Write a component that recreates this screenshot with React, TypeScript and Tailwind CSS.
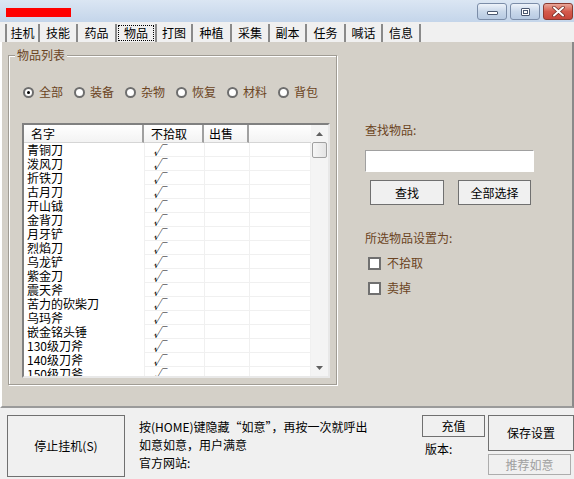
import React from "react";

const items = [
  "青铜刀",
  "泼风刀",
  "折铁刀",
  "古月刀",
  "开山钺",
  "金背刀",
  "月牙铲",
  "烈焰刀",
  "乌龙铲",
  "紫金刀",
  "震天斧",
  "苦力的砍柴刀",
  "乌玛斧",
  "嵌金铭头锤",
  "130级刀斧",
  "140级刀斧",
  "150级刀斧",
];

const tabs = [
  { t: "挂机", w: "w-[35px]" },
  { t: "技能", w: "w-[38px]" },
  { t: "药品", w: "w-[39px]" },
  { t: "物品", w: "w-[40px]", sel: true },
  { t: "打图", w: "w-[36px]" },
  { t: "种植", w: "w-[39px]" },
  { t: "采集", w: "w-[38px]" },
  { t: "副本", w: "w-[37px]" },
  { t: "任务", w: "w-[39px]" },
  { t: "喊话", w: "w-[37px]" },
  { t: "信息", w: "w-[38px]" },
];

const radios = [
  { t: "全部", on: true },
  { t: "装备" },
  { t: "杂物" },
  { t: "恢复" },
  { t: "材料" },
  { t: "背包" },
];

function Radio({ checked }: { checked?: boolean }) {
  return (
    <span className="flex h-[11px] w-[11px] shrink-0 items-center justify-center rounded-full border-2 border-[#6e6e6e] bg-white">
      {checked && <span className="h-[3px] w-[3px] rounded-full bg-black" />}
    </span>
  );
}

function Check() {
  return <span className="block h-[13px] w-[13px] shrink-0 border-2 border-[#707070] bg-white" />;
}

function WinBtn({ kind }: { kind: "min" | "max" | "close" }) {
  const base =
    kind === "close"
      ? "bg-linear-to-b from-[#e9a79a] via-[#d45a4c] to-[#c8463a] border-[#8a3a30]"
      : "bg-linear-to-b from-[#eef3fa] via-[#c9d8ea] to-[#b7cae2] border-[#7b8da8]";
  return (
    <div className={`flex h-[17px] w-[30px] items-center justify-center rounded-[3px] border ${base}`}>
      {kind === "min" && (
        <span className="mt-[3px] block h-[4px] w-[11px] rounded-[1px] border border-[#4a5870] bg-white" />
      )}
      {kind === "max" && (
        <span className="block h-[8px] w-[9px] rounded-[1px] border border-[#4a5870] bg-white p-[1px]">
          <span className="block h-full w-full border border-[#4a5870]" />
        </span>
      )}
      {kind === "close" && (
        <svg width="13" height="11" viewBox="0 0 13 11">
          <path d="M2 1.5 L11 9.5 M11 1.5 L2 9.5" stroke="#6a2a22" strokeWidth="3.4" strokeLinecap="round" />
          <path d="M2 1.5 L11 9.5 M11 1.5 L2 9.5" stroke="#ffffff" strokeWidth="2" strokeLinecap="round" />
        </svg>
      )}
    </div>
  );
}

function Btn({ children, className }: { children: React.ReactNode; className?: string }) {
  return (
    <div
      className={`flex items-center justify-center whitespace-nowrap border border-[#707070] bg-[#f0f0f0] text-[12px] text-black ${className ?? ""}`}
    >
      {children}
    </div>
  );
}

export default function App() {
  return (
    <div className="flex h-[479px] w-[574px] flex-col overflow-hidden bg-[#f0f0f0] font-['Noto_Sans_CJK_SC','Noto_Sans',sans-serif] text-[12px] leading-[14px]">
      {/* Title bar */}
      <div className="flex h-[22px] shrink-0 items-center bg-linear-to-b from-[#dbe6f3] to-[#c4d5ea] pl-[6px] pr-[1px]">
        <div className="mt-[3px] h-[9px] w-[65px] bg-[#ff0000]" />
        <div className="ml-auto flex gap-[3px] self-start pt-[3px]">
          <WinBtn kind="min" />
          <WinBtn kind="max" />
          <WinBtn kind="close" />
        </div>
      </div>

      {/* Tabs */}
      <div className="flex h-[20px] shrink-0 items-end pl-[5px]">
        {tabs.map((tb, i) => (
          <div
            key={tb.t}
            className={`flex h-[18px] items-center justify-center border-r-2 border-r-[#8a8a8a] ${
              i === 0 ? "border-l-2 border-l-[#8a8a8a]" : ""
            } ${tb.w} text-[12px] text-black`}
          >
            {tb.sel ? (
              <span className="flex h-[16px] w-[36px] items-center justify-center border border-dotted border-black">
                {tb.t}
              </span>
            ) : (
              tb.t
            )}
          </div>
        ))}
      </div>

      {/* Tab panel */}
      <div className="flex h-[366px] shrink-0 border-b-2 border-l-2 border-r-2 border-b-[#9a9a9a] border-l-white border-r-[#8a8a8a] bg-[#d4d0c8] pl-[6px] text-[#6b4423]">
        {/* Group box */}
        <fieldset className="mt-[5px] h-[338px] w-[329px] shrink-0 border border-[#a09c94] px-0 pb-0 pt-0 shadow-[inset_1px_1px_0_#ffffff,1px_1px_0_#ffffff]">
          <legend className="ml-[6px] bg-[#d4d0c8] px-[2px] text-[12px] leading-[16px] text-[#6b4423]">物品列表</legend>
          <div className="ml-[14px] mt-[21px] flex h-[16px] items-center whitespace-nowrap">
            {radios.map((r) => (
              <div key={r.t} className="mr-[10px] flex shrink-0 items-center gap-[5px]">
                <Radio checked={r.on} />
                <span className="w-[25px] shrink-0">{r.t}</span>
              </div>
            ))}
          </div>

          {/* List */}
          <div className="ml-[13px] mt-[23px] flex h-[255px] w-[308px] flex-col border-2 border-b-[#e8e8e8] border-l-[#808080] border-r-[#e8e8e8] border-t-[#808080] bg-white text-black">
            <div className="flex min-h-0 flex-1">
              <div className="flex min-w-0 flex-1 flex-col">
                <div className="flex h-[18px] shrink-0 bg-linear-to-b from-[#ffffff] to-[#f2f2f2] text-[12px]">
                  <div className="flex w-[120px] items-center border-b border-r-2 border-b-[#d5d5d5] border-r-[#a0a0a0] pl-[7px]">名字</div>
                  <div className="flex w-[60px] items-center border-b border-r-2 border-b-[#d5d5d5] border-r-[#a0a0a0] pl-[7px]">不拾取</div>
                  <div className="flex w-[45px] items-center border-b border-r-2 border-b-[#d5d5d5] border-r-[#a0a0a0] pl-[5px]">出售</div>
                  <div className="flex flex-1 border-b border-b-[#d5d5d5]" />
                </div>
                <div className="min-h-0 flex-1 overflow-hidden">
                  {items.map((it) => (
                    <div key={it} className="flex h-[14px] text-[12px] leading-[14px]">
                      <div className="w-[120px] whitespace-nowrap pl-[3px]">{it}</div>
                      <div className="w-[60px] border-b border-l border-[#f0f0f0] pl-[8px] italic">√</div>
                      <div className="w-[45px] border-b border-l border-[#f0f0f0]" />
                      <div className="flex-1 border-b border-l border-r border-[#f0f0f0]" />
                    </div>
                  ))}
                </div>
              </div>
              {/* Scrollbar */}
              <div className="flex w-[17px] shrink-0 flex-col items-center bg-[#f4f4f4]">
                <div className="flex h-[17px] w-full items-center justify-center">
                  <svg width="7" height="4" viewBox="0 0 7 4"><path d="M0 4 L3.5 0 L7 4 Z" fill="#606060" /></svg>
                </div>
                <div className="h-[16px] w-[15px] rounded-[2px] border border-[#a0a0a0] bg-linear-to-r from-[#f6f6f6] to-[#e4e4e4]" />
                <div className="flex-1" />
                <div className="flex h-[17px] w-full items-center justify-center">
                  <svg width="7" height="4" viewBox="0 0 7 4"><path d="M0 0 L7 0 L3.5 4 Z" fill="#606060" /></svg>
                </div>
              </div>
            </div>
          </div>
        </fieldset>

        {/* Right panel */}
        <div className="ml-[28px] flex flex-col">
          <div className="mt-[81px] h-[14px]">查找物品:</div>
          <div className="mt-[13px] h-[22px] w-[169px] border border-[#a0a0a0] border-b-white border-r-white bg-white" />
          <div className="mt-[8px] flex">
            <Btn className="ml-[5px] h-[25px] w-[74px]">查找</Btn>
            <Btn className="ml-[14px] h-[25px] w-[73px]">全部选择</Btn>
          </div>
          <div className="mt-[26px] h-[14px]">所选物品设置为:</div>
          <div className="ml-[3px] mt-[11px] flex items-center gap-[6px]">
            <Check />
            <span>不拾取</span>
          </div>
          <div className="ml-[3px] mt-[11px] flex items-center gap-[6px]">
            <Check />
            <span>卖掉</span>
          </div>
        </div>
      </div>

      {/* Bottom */}
      <div className="flex min-h-0 flex-1 pt-[7px] text-black">
        <Btn className="ml-[7px] h-[62px] w-[118px]">停止挂机(S)</Btn>
        <div className="ml-[14px] flex w-[270px] flex-col whitespace-nowrap pt-[3px] leading-[18px]">
          <span>按(HOME)键隐藏“如意”，再按一次就呼出</span>
          <span>如意如意，用户满意</span>
          <span>官方网站:</span>
        </div>
        <div className="ml-[13px] flex w-[63px] flex-col">
          <Btn className="h-[22px] w-[63px]">充值</Btn>
          <span className="ml-[3px] mt-[5px]">版本:</span>
        </div>
        <div className="ml-[3px] flex flex-1 flex-col">
          <Btn className="h-[36px] w-full">保存设置</Btn>
          <div className="mt-[3px] flex h-[21px] w-[83px] items-center justify-center border border-[#adadad] bg-[#f0f0f0] text-[#a0a0a0]">
            推荐如意
          </div>
        </div>
      </div>
    </div>
  );
}
